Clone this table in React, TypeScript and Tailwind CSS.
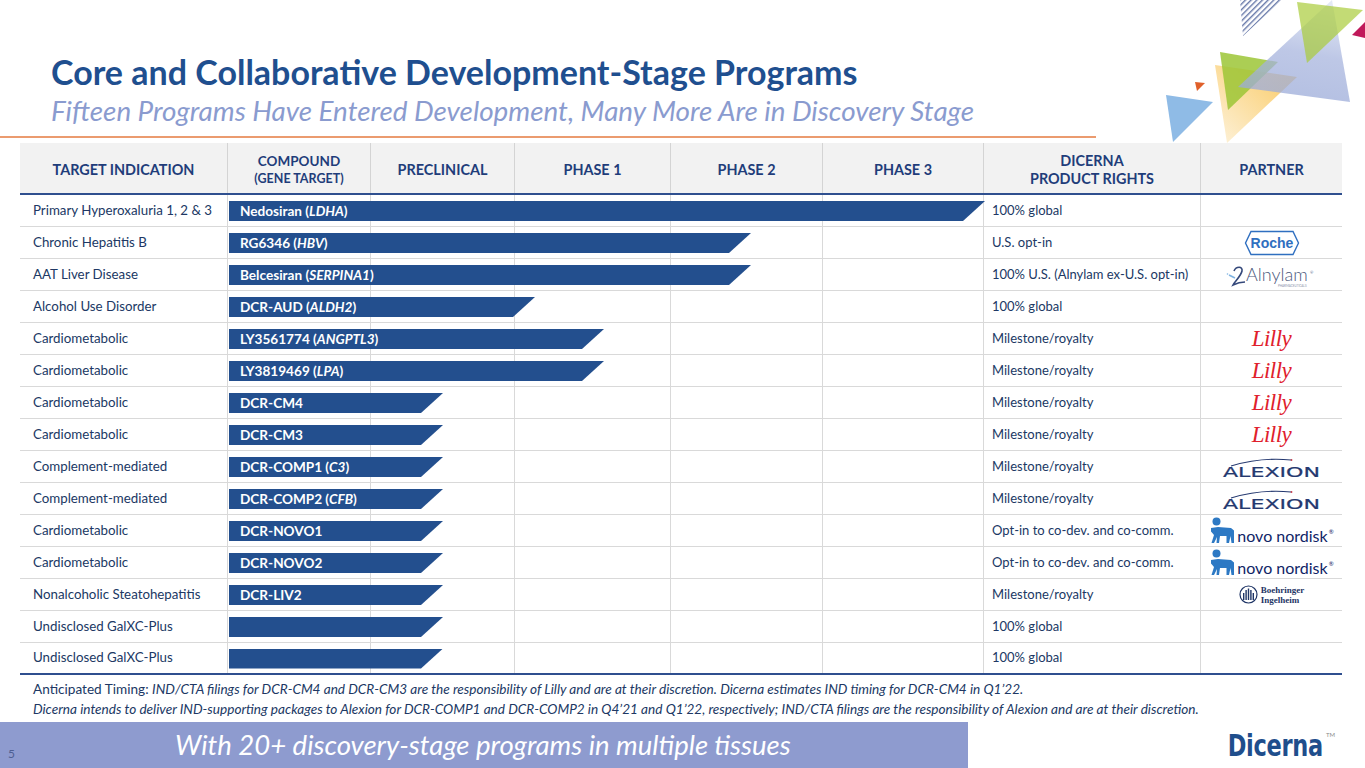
import React from 'react';

type Partner = 'roche' | 'alnylam' | 'lilly' | 'alexion' | 'novo' | 'boehringer' | null;

interface Program {
  indication: string;
  name: string;
  gene?: string;
  rights: string;
  width: number;
  partner: Partner;
}

const programs: Program[] = [
  { indication: 'Primary Hyperoxaluria 1, 2 & 3', name: 'Nedosiran', gene: 'LDHA', rights: '100% global', width: 756, partner: null },
  { indication: 'Chronic Hepatitis B', name: 'RG6346', gene: 'HBV', rights: 'U.S. opt-in', width: 522, partner: 'roche' },
  { indication: 'AAT Liver Disease', name: 'Belcesiran', gene: 'SERPINA1', rights: '100% U.S. (Alnylam ex-U.S. opt-in)', width: 522, partner: 'alnylam' },
  { indication: 'Alcohol Use Disorder', name: 'DCR-AUD', gene: 'ALDH2', rights: '100% global', width: 306, partner: null },
  { indication: 'Cardiometabolic', name: 'LY3561774', gene: 'ANGPTL3', rights: 'Milestone/royalty', width: 375, partner: 'lilly' },
  { indication: 'Cardiometabolic', name: 'LY3819469', gene: 'LPA', rights: 'Milestone/royalty', width: 375, partner: 'lilly' },
  { indication: 'Cardiometabolic', name: 'DCR-CM4', rights: 'Milestone/royalty', width: 214, partner: 'lilly' },
  { indication: 'Cardiometabolic', name: 'DCR-CM3', rights: 'Milestone/royalty', width: 214, partner: 'lilly' },
  { indication: 'Complement-mediated', name: 'DCR-COMP1', gene: 'C3', rights: 'Milestone/royalty', width: 214, partner: 'alexion' },
  { indication: 'Complement-mediated', name: 'DCR-COMP2', gene: 'CFB', rights: 'Milestone/royalty', width: 214, partner: 'alexion' },
  { indication: 'Cardiometabolic', name: 'DCR-NOVO1', rights: 'Opt-in to co-dev. and co-comm.', width: 214, partner: 'novo' },
  { indication: 'Cardiometabolic', name: 'DCR-NOVO2', rights: 'Opt-in to co-dev. and co-comm.', width: 214, partner: 'novo' },
  { indication: 'Nonalcoholic Steatohepatitis', name: 'DCR-LIV2', rights: 'Milestone/royalty', width: 214, partner: 'boehringer' },
  { indication: 'Undisclosed GalXC-Plus', name: '', rights: '100% global', width: 214, partner: null },
  { indication: 'Undisclosed GalXC-Plus', name: '', rights: '100% global', width: 214, partner: null },
];

const COLS = 'grid grid-cols-[207px_143px_144px_156px_152px_161px_217px_142px]';

const Decoration = () => (
  <svg
    className="pointer-events-none absolute left-[1160px] top-0"
    width="205"
    height="146"
    viewBox="1160 0 205 146"
  >
    <defs>
      <pattern id="stripes" width="4" height="4" patternUnits="userSpaceOnUse" patternTransform="rotate(45)">
        <rect width="1.4" height="4" fill="#6577a8" />
      </pattern>
      <linearGradient id="yel" x1="1" y1="0" x2="0" y2="1">
        <stop offset="0" stopColor="#f9c14a" />
        <stop offset="1" stopColor="#fdf1d8" />
      </linearGradient>
      <linearGradient id="lav" x1="0.6" y1="0" x2="0.4" y2="1">
        <stop offset="0" stopColor="#dbe2f2" />
        <stop offset="0.5" stopColor="#a8b5de" />
        <stop offset="1" stopColor="#9aaad8" />
      </linearGradient>
    </defs>
    <polygon points="1240,0 1282,0 1243,36" fill="url(#stripes)" />
    <polygon points="1215,65 1297,77 1227,143" fill="url(#yel)" opacity="0.9" />
    <polygon points="1220,52 1278,62 1228,110" fill="#9cc636" opacity="0.85" />
    <polygon points="1238,87 1332,0 1350,102" fill="url(#lav)" opacity="0.75" />
    <polygon points="1297,2 1363,10 1307,63" fill="#a9cc3a" opacity="0.7" />
    <polygon points="1352,35 1365,22 1365,38" fill="#c0195a" />
    <polygon points="1195,82 1205,83 1197,91" fill="#e0602a" />
    <polygon points="1166,95 1213,102 1173,142" fill="#8fbbe6" />
  </svg>
);

const Roche = () => (
  <svg width="56" height="26" viewBox="0 0 56 26">
    <polygon points="7,1.5 49,1.5 54.5,13 49,24.5 7,24.5 1.5,13" fill="none" stroke="#2f6fc0" strokeWidth="1.4" />
    <text x="28" y="18" textAnchor="middle" fontFamily="'Liberation Sans Narrow', 'Liberation Sans', sans-serif" fontWeight="700" fontSize="14" fill="#2f6fc0">
      Roche
    </text>
  </svg>
);

const Alnylam = () => (
  <svg width="92" height="26" viewBox="0 0 92 26">
    <path d="M8 9 C 10 4, 17 4, 16 9 C 15 14, 9 19, 7 23 C 11 21, 15 20, 19 20" stroke="#34487a" strokeWidth="1.6" fill="none" />
    <path d="M3 13 L9 16" stroke="#7fb3e2" strokeWidth="1.6" />
    <circle cx="1.5" cy="12" r="0.8" fill="#7fb3e2" />
    <text x="20" y="19" fontFamily="Lato, sans-serif" fontWeight="300" fontSize="18" fill="#4b587c">
      Alnylam
    </text>
    <text x="84" y="12" fontFamily="Lato, sans-serif" fontSize="4" fill="#4b587c">®</text>
    <text x="52" y="24.5" fontFamily="Lato, sans-serif" fontSize="3" fill="#8a93aa">PHARMACEUTICALS</text>
  </svg>
);

const Lilly = () => (
  <span className="font-['Liberation_Serif',serif] text-[23px] leading-none italic tracking-[-0.5px] text-[#e0202c]">
    Lilly
  </span>
);

const Alexion = () => (
  <svg width="102" height="24" viewBox="0 0 102 24">
    <path d="M10 11 Q 40 2 70 5" stroke="#24386f" strokeWidth="1.1" fill="none" />
    <circle cx="70.5" cy="5" r="0.9" fill="#c43a4a" />
    <text
      x="2"
      y="21.5"
      fontFamily="'DejaVu Sans', sans-serif"
      fontSize="14"
      textLength="97"
      lengthAdjust="spacingAndGlyphs"
      stroke="#24386f"
      strokeWidth="0.2"
      fill="#24386f"
    >
      ALEXION
    </text>
  </svg>
);

const Novo = () => (
  <div className="flex items-end gap-[1px]">
    <svg width="27" height="28" viewBox="0 0 27 28">
      <g fill="#2d79c4">
        <circle cx="7.5" cy="4.5" r="4" />
        <path d="M2 11 L9 10 L22 11 L25 13.5 L25 26 L22.5 26 L21.5 19 L20 26 L17.5 26 L17.5 19 L11 19 L10 26 L7.5 26 L8 20 L5 26 L2.5 26 L5 18 L2 14.5 Z" />
      </g>
    </svg>
    <span className="font-['Lato',sans-serif] text-[16px] leading-[18px] text-[#0f2466]">novo nordisk</span>
    <span className="mb-[10px] text-[6px] leading-none text-[#0f2466]">®</span>
  </div>
);

const Boehringer = () => (
  <div className="flex items-center gap-[3px]">
    <svg width="19" height="19" viewBox="0 0 19 19">
      <circle cx="9.5" cy="9.5" r="8.5" fill="none" stroke="#1f3566" strokeWidth="1.2" />
      <g fill="#1f3566">
        <rect x="4" y="8" width="1.4" height="7" />
        <rect x="6.4" y="5" width="1.4" height="10" />
        <rect x="8.8" y="3.5" width="1.4" height="11.5" />
        <rect x="11.2" y="5" width="1.4" height="10" />
        <rect x="13.6" y="8" width="1.4" height="7" />
      </g>
    </svg>
    <div className="font-['Liberation_Serif',serif] text-[9px] leading-[10px] font-bold text-[#1f3566]">
      <div>Boehringer</div>
      <div>Ingelheim</div>
    </div>
  </div>
);

const PartnerLogo = ({ partner }: { partner: Partner }) => {
  switch (partner) {
    case 'roche':
      return <Roche />;
    case 'alnylam':
      return <Alnylam />;
    case 'lilly':
      return <Lilly />;
    case 'alexion':
      return <Alexion />;
    case 'novo':
      return <Novo />;
    case 'boehringer':
      return <Boehringer />;
    default:
      return null;
  }
};

const HeaderCell = ({ children, first }: { children: React.ReactNode; first?: boolean }) => (
  <div
    className={`flex flex-col items-center justify-center pt-[3px] text-center text-[14.4px] leading-[18px] font-bold text-[#1f3d7a] ${
      first ? '' : 'border-l border-[#d4d4d4]'
    }`}
  >
    {children}
  </div>
);

const ProgramRow = ({ p, last }: { p: Program; last: boolean }) => (
  <div className={`${COLS} h-[32px] ${last ? 'border-b-2 border-[#2f4f8f]' : 'border-b border-[#d9d9d9]'}`}>
    <div className="col-start-1 row-start-1 flex items-center pl-[13px] text-[13.3px] text-[#203864]">{p.indication}</div>
    <div className="col-start-2 row-start-1 border-l border-[#d9d9d9]" />
    <div className="col-start-3 row-start-1 border-l border-[#d9d9d9]" />
    <div className="col-start-4 row-start-1 border-l border-[#d9d9d9]" />
    <div className="col-start-5 row-start-1 border-l border-[#d9d9d9]" />
    <div className="col-start-6 row-start-1 border-l border-[#d9d9d9]" />
    <div className="col-start-7 row-start-1 flex items-center border-l border-[#d9d9d9] pl-[8px] text-[13px] text-[#203864]">
      {p.rights}
    </div>
    <div className="col-start-8 row-start-1 flex items-center justify-center border-l border-[#d9d9d9]">
      <PartnerLogo partner={p.partner} />
    </div>
    <div
      className="z-10 col-start-2 col-end-8 row-start-1 ml-[2px] mt-[1px] flex h-[20px] items-center self-center bg-[#234f8e] pl-[11px] text-[13.6px] font-bold text-white [clip-path:polygon(0_0,100%_0,calc(100%_-_22px)_100%,0_100%)]"
      style={{ width: p.width }}
    >
      {p.name}
      {p.gene ? (
        <>
          {' ('}
          <i>{p.gene}</i>
          {')'}
        </>
      ) : null}
    </div>
  </div>
);

export default function App() {
  return (
    <div className="relative h-[768px] w-[1365px] overflow-hidden bg-white font-['Lato',sans-serif]">
      <Decoration />
      <div className="pl-[51px] pt-[51px]">
        <h1 className="text-[34px] leading-[42px] font-bold text-[#1f4f8f]">
          Core and Collaborative Development-Stage Programs
        </h1>
        <p className="mt-[2px] text-[27.8px] leading-[32px] italic text-[#8a9bcf]">
          Fifteen Programs Have Entered Development, Many More Are in Discovery Stage
        </p>
      </div>
      <div className="mt-[9px] h-[2px] w-[1096px] bg-[#eb9b6f]" />

      <div className="mx-[20px] mt-[5px] w-[1322px]">
        <div className={`${COLS} h-[52px] border-b-2 border-[#2f4f8f] bg-[#f2f2f2]`}>
          <HeaderCell first>TARGET INDICATION</HeaderCell>
          <HeaderCell>
            <span className="text-[13.5px]">COMPOUND</span>
            <span className="text-[12.5px]">(GENE TARGET)</span>
          </HeaderCell>
          <HeaderCell>PRECLINICAL</HeaderCell>
          <HeaderCell>PHASE 1</HeaderCell>
          <HeaderCell>PHASE 2</HeaderCell>
          <HeaderCell>PHASE 3</HeaderCell>
          <HeaderCell>
            <span>DICERNA</span>
            <span>PRODUCT RIGHTS</span>
          </HeaderCell>
          <HeaderCell>PARTNER</HeaderCell>
        </div>
        {programs.map((p, i) => (
          <ProgramRow key={i} p={p} last={i === programs.length - 1} />
        ))}
      </div>

      <div className="mt-[5px] pl-[33px] text-[13.6px] leading-[19.5px] text-[#203864]">
        <p>
          Anticipated Timing:{' '}
          <i>
            IND/CTA filings for DCR-CM4 and DCR-CM3 are the responsibility of Lilly and are at their discretion. Dicerna
            estimates IND timing for DCR-CM4 in Q1’22.
          </i>
        </p>
        <p>
          <i>
            Dicerna intends to deliver IND-supporting packages to Alexion for DCR-COMP1 and DCR-COMP2 in Q4’21 and Q1’22,
            respectively; IND/CTA filings are the responsibility of Alexion and are at their discretion.
          </i>
        </p>
      </div>

      <div className="mt-[3px] flex h-[46px] items-stretch">
        <div className="flex w-[968px] items-center bg-[#8e9bcf]">
          <span className="w-[175px] self-end pb-[5px] pl-[8px] text-[12px] text-[#4e5f92]">5</span>
          <span className="text-[27.5px] italic text-white">With 20+ discovery-stage programs in multiple tissues</span>
        </div>
        <div className="flex flex-1 items-center justify-end gap-[3px] pr-[30px]">
          <span className="inline-block scale-y-[1.18] font-['DejaVu_Sans_Condensed','DejaVu_Sans',sans-serif] text-[25px] leading-none font-semibold tracking-[-0.3px] text-[#1f4e8c]">
            Dicerna
          </span>
          <span className="mb-[20px] text-[6px] leading-none text-[#8a8a8a]">TM</span>
        </div>
      </div>
    </div>
  );
}
